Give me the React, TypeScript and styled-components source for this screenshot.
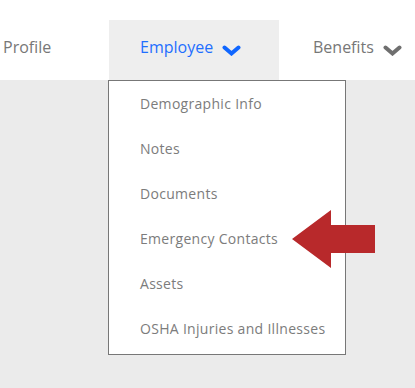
import React, { FC } from 'react'
import styled, { createGlobalStyle } from 'styled-components'

const GlobalStyle = createGlobalStyle`
  body {
    margin: 0;
    font-family: "Open Sans", "Liberation Sans", sans-serif;
    background: #ebebeb;
  }
`

const Page = styled.div`
  position: relative;
  min-height: 388px;
  background: #ebebeb;
  overflow: hidden;
`

const NavBar = styled.nav`
  display: flex;
  align-items: flex-end;
  height: 80px;
  background: #ffffff;
`

const Tab = styled.div<{ active?: boolean; width: number; indent: number }>`
  position: relative;
  display: flex;
  align-items: center;
  gap: 9px;
  box-sizing: border-box;
  width: ${({ width }) => width}px;
  height: 60px;
  padding: 0 0 6px ${({ indent }) => indent}px;
  background: ${({ active }) => (active ? '#eeeeee' : 'transparent')};
  color: ${({ active }) => (active ? '#1f6fff' : '#777777')};
  font-size: 16px;
`

const Chevron = styled.svg<{ active?: boolean }>`
  width: 19px;
  height: 11px;
  margin-top: 7px;
  color: ${({ active }) => (active ? '#0f66ff' : '#6f6f6f')};
`

const Dropdown = styled.ul`
  position: absolute;
  top: 100%;
  left: -1px;
  width: 238px;
  box-sizing: border-box;
  margin: 0;
  padding: 1px 0 2px;
  list-style: none;
  background: #ffffff;
  border: 1px solid #777777;
  z-index: 2;
`

const DropdownItem = styled.li`
  display: flex;
  align-items: center;
  height: 45px;
  padding: 0 0 3px 31px;
  box-sizing: border-box;
  color: #7c7c7c;
  font-size: 14px;
  letter-spacing: 0.3px;
`

const Arrow = styled.svg`
  position: absolute;
  left: 292px;
  top: 210px;
  width: 83px;
  height: 58px;
  z-index: 3;
`

const ChevronDown: FC<{ active?: boolean }> = ({ active }) => (
  <Chevron active={active} viewBox="0 0 19 11">
    <polyline
      points="2.5,2.5 9.5,8.5 16.5,2.5"
      fill="none"
      stroke="currentColor"
      strokeWidth={4}
      strokeLinecap="round"
    />
  </Chevron>
)

const employeeItems = [
  'Demographic Info',
  'Notes',
  'Documents',
  'Emergency Contacts',
  'Assets',
  'OSHA Injuries and Illnesses',
]

const App: FC = () => (
  <Page>
    <GlobalStyle />
    <NavBar>
      <Tab width={109} indent={3}>
        Profile
      </Tab>
      <Tab active width={170} indent={31}>
        Employee
        <ChevronDown active />
        <Dropdown>
          {employeeItems.map((item) => (
            <DropdownItem key={item}>{item}</DropdownItem>
          ))}
        </Dropdown>
      </Tab>
      <Tab width={136} indent={34}>
        Benefits
        <ChevronDown />
      </Tab>
    </NavBar>
    <Arrow viewBox="0 0 83 58">
      <polygon points="0,29 39,0 39,15 83,15 83,43 39,43 39,58" fill="#b8292b" />
    </Arrow>
  </Page>
)

export default App
